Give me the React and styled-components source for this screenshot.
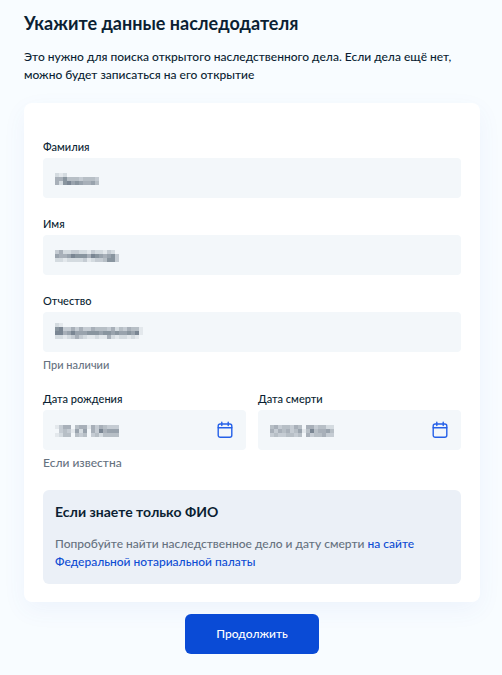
import React from 'react'
import styled, { createGlobalStyle } from 'styled-components'

const GlobalStyle = createGlobalStyle`
  *, *::before, *::after {
    box-sizing: border-box;
  }

  body {
    margin: 0;
    min-height: 100vh;
    background: #f8fcff;
    color: #0b1f33;
    font-family: Lato, "Open Sans", sans-serif;
    font-size: 12px;
    line-height: 18px;
    font-weight: 500;
  }
`

const Page = styled.main`
  padding: 11px 22px 20px 24px;
`

const Title = styled.h1`
  margin: 0;
  font-size: 18px;
  line-height: 24px;
  font-weight: 700;
`

const Lead = styled.p`
  margin: 13px 0 19px;
`

const Card = styled.form`
  padding: 36px 19px 18px;
  border-radius: 8px;
  background: #fff;
  box-shadow: 0 8px 24px rgba(60, 100, 200, 0.06);
`

const Field = styled.div`
  display: flex;
  flex-direction: column;
  flex: 1;
  min-width: 0;
  margin-bottom: ${({ $gap }) => $gap || 0}px;
`

const Label = styled.label`
  margin-bottom: 3px;
  font-size: 11px;
  line-height: 16px;
`

const Control = styled.div`
  position: relative;
  display: flex;
  height: 40px;
  border-radius: 4px;
  background: #f3f7fa;
`

const Input = styled.input`
  flex: 1;
  min-width: 0;
  padding: 0 12px;
  border: none;
  border-radius: 4px;
  background: transparent;
  color: inherit;
  font: inherit;
`

const Hidden = styled.svg`
  position: absolute;
  left: 12px;
  bottom: 13px;
  pointer-events: none;
`

const IconButton = styled.button`
  display: flex;
  align-items: center;
  justify-content: center;
  width: 42px;
  padding: 0;
  border: none;
  background: transparent;
  color: #2560e8;
  cursor: pointer;
`

const Hint = styled.span`
  margin-top: 4px;
  color: #66727f;
  font-size: ${({ $size }) => $size || 11}px;
  line-height: 18px;
`

const Dates = styled.div`
  display: flex;
  align-items: flex-start;
  gap: 12px;
`

const Notice = styled.section`
  margin-top: 18px;
  padding: 12px 12px 13px;
  border-radius: 6px;
  background: #ebf0f7;
  color: #66727f;
`

const NoticeTitle = styled.h2`
  margin: 0 0 13px;
  color: #0b1f33;
  font-size: 14px;
  line-height: 20px;
  font-weight: 700;
`

const NoticeText = styled.p`
  margin: 0;
`

const Link = styled.a`
  color: #0d4cd3;
  text-decoration: none;
`

const Actions = styled.div`
  display: flex;
  justify-content: center;
  margin-top: 12px;
`

const Submit = styled.button`
  height: 40px;
  padding: 0 31px;
  border: none;
  border-radius: 6px;
  background: #0a4bd6;
  color: #fff;
  font: inherit;
  cursor: pointer;
`

// Hidden values: each digit is the darkness of one 4px block
const masks = {
  surname: ['21200000000', '55744434443', '52786765564'],
  name: ['3522332213221320', '6556877758765673', '2212222312334773'],
  patronymic: [
    '2100000000000000000000',
    '7833535335444352435441',
    '8856866677767767667681',
    '2212353211211521221210',
  ],
  birth: ['1355045515354333', '0343162605385666', '1244043403424444'],
  death: ['4534435405534422', '5354534614845564', '3433443405344533'],
}

const Mask = ({ rows }) => (
  <Hidden
    width={rows[0].length * 4}
    height={rows.length * 4}
    shapeRendering="crispEdges"
    aria-hidden="true"
  >
    {rows.map((row, y) =>
      row.split('').map((n, x) => (
        <rect
          key={`${y}-${x}`}
          x={x * 4}
          y={y * 4}
          width="4"
          height="4"
          fill="#0b1f33"
          opacity={Number(n) * 0.065}
        />
      ))
    )}
  </Hidden>
)

const CalendarIcon = () => (
  <svg width="16" height="18" viewBox="0 0 16 18" fill="none" stroke="currentColor" strokeWidth="1.4" strokeLinecap="round" aria-hidden="true">
    <rect x="1.2" y="3" width="13.6" height="13.3" rx="2" />
    <path d="M1.2 6.8h13.6M4.8 1.2v3.4M11.2 1.2v3.4" />
  </svg>
)

const TextField = ({ id, label, hint, hintSize, gap, date }) => (
  <Field $gap={gap}>
    <Label htmlFor={id}>{label}</Label>
    <Control>
      <Input id={id} name={id} type="text" autoComplete="off" />
      <Mask rows={masks[id]} />
      {date && (
        <IconButton type="button" aria-label={label}>
          <CalendarIcon />
        </IconButton>
      )}
    </Control>
    {hint && <Hint $size={hintSize}>{hint}</Hint>}
  </Field>
)

const App = () => {
  return (
    <Page>
      <GlobalStyle />
      <Title>Укажите данные наследодателя</Title>
      <Lead>
        Это нужно для поиска открытого наследственного дела. Если дела ещё нет, можно будет записаться на его открытие
      </Lead>

      <Card id="testator" onSubmit={(e) => e.preventDefault()}>
        <TextField id="surname" label="Фамилия" gap={18} />
        <TextField id="name" label="Имя" gap={18} />
        <TextField id="patronymic" label="Отчество" hint="При наличии" gap={17} />
        <Dates>
          <TextField id="birth" label="Дата рождения" hint="Если известна" hintSize={12} date />
          <TextField id="death" label="Дата смерти" date />
        </Dates>
        <Notice>
          <NoticeTitle>Если знаете только ФИО</NoticeTitle>
          <NoticeText>
            Попробуйте найти наследственное дело и дату смерти{' '}
            <Link href="#notary">на сайте Федеральной нотариальной палаты</Link>
          </NoticeText>
        </Notice>
      </Card>

      <Actions>
        <Submit type="submit" form="testator">Продолжить</Submit>
      </Actions>
    </Page>
  )
}

export default App
